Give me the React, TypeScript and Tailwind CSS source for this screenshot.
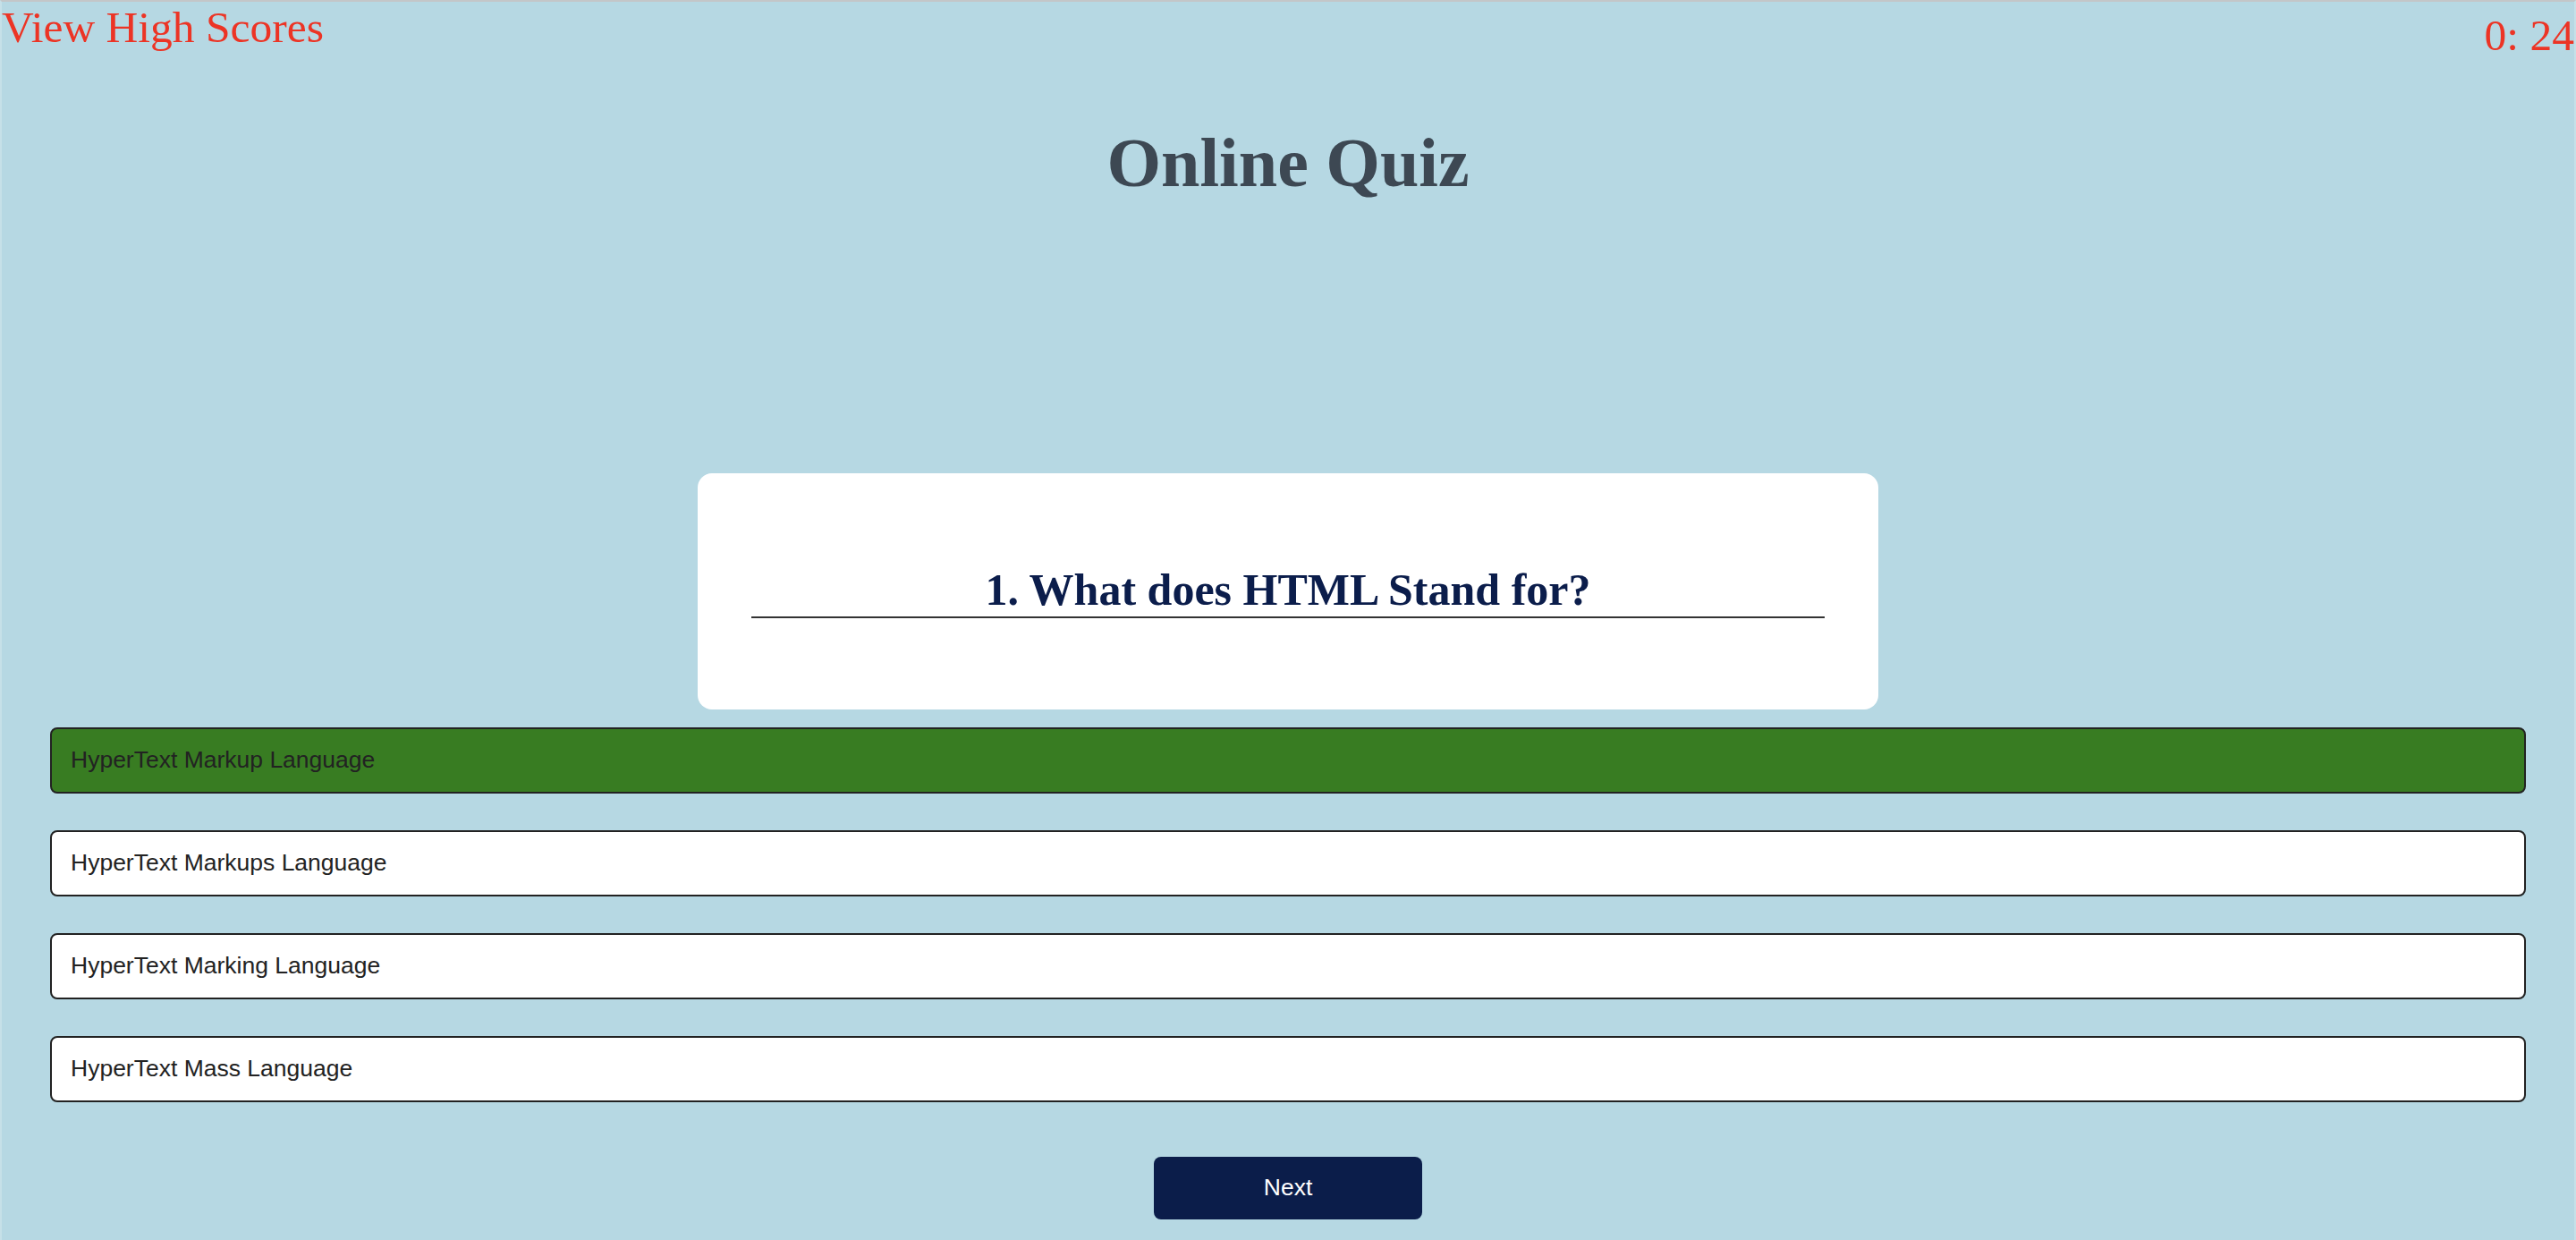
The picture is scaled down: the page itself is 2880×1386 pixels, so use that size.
import { useState } from "react"

const answers = [
  "HyperText Markup Language",
  "HyperText Markups Language",
  "HyperText Marking Language",
  "HyperText Mass Language",
]

export default function App() {
  const [picked] = useState(0)

  return (
    <div className="min-h-screen bg-[#b6d8e3] border-t-2 border-x-2 border-t-[#c3c6c8] border-x-[#c6e0e8] font-['Liberation_Serif',serif]">
      {/* top bar */}
      <header className="flex justify-between items-start h-[66px]">
        <a href="#" className="pt-[1px] text-[49.5px] leading-[56px] text-[#ec3425]">
          View High Scores
        </a>
        <span className="mt-[10px] text-[49.5px] leading-[56px] text-[#ec3425]">0: 24</span>
      </header>

      <h1 className="mt-[64px] text-center text-[78px] leading-[100px] font-bold text-[#3d4853]">
        Online Quiz
      </h1>

      <main className="mt-[297px] flex flex-col items-center">
        <div className="w-[1320px] bg-white rounded-[16px] px-[60px] py-[102px]">
          <h2 className="text-center text-[50px] leading-[56px] font-bold text-[#0b1d4b] pb-[2px] border-b-2 border-[#333333]">
            1. What does HTML Stand for?
          </h2>
        </div>

        <div className="self-stretch mx-[54px] mt-[20px] flex flex-col gap-[41px] font-['Liberation_Sans',Arial,sans-serif]">
          {answers.map((a, i) => (
            <button
              key={a}
              type="button"
              className={
                "h-[74px] w-full text-left px-[21px] border-2 border-[#222222] rounded-[8px] text-[26.5px] text-[#222222] " +
                (i === picked ? "bg-[#387c22]" : "bg-white")
              }
            >
              {a}
            </button>
          ))}
        </div>

        <button
          type="button"
          className="mt-[61px] w-[300px] h-[70px] rounded-[8px] bg-[#0b1d4a] text-white text-[26.5px] font-['Liberation_Sans',Arial,sans-serif]"
        >
          Next
        </button>
      </main>
    </div>
  )
}
